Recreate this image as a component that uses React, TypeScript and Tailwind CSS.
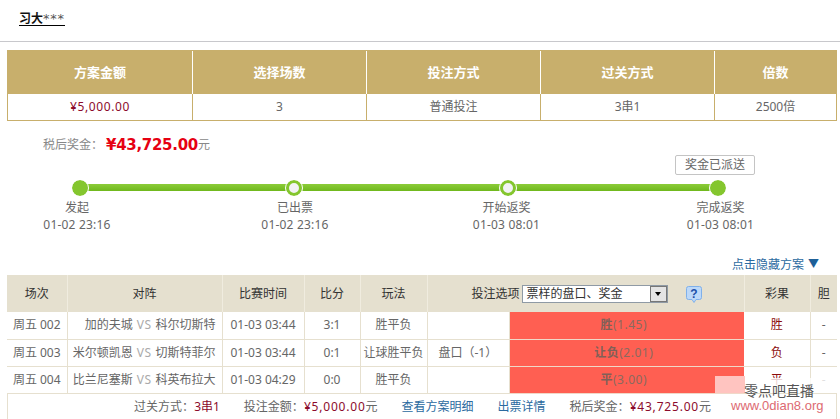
const cjk = "font-['Noto_Sans','Noto_Sans_CJK_SC',sans-serif]";

function Step({ title, time, hollow, shift }: { title: string; time: string; hollow?: boolean; shift: string }) {
  return (
    <div className="flex w-[80px] flex-col items-center text-[12px] leading-[17px] text-[#666]">
      <div className="relative z-10 flex h-[16px] w-[16px] items-center justify-center">
        {hollow ? (
          <div className="h-[16px] w-[16px] shrink-0 rounded-full border-[3px] border-[#84c62e] bg-[#f2f2f5] outline-[1px] outline-white" />
        ) : (
          <div className="h-[16px] w-[16px] shrink-0 rounded-full bg-[#84c62e] outline-[1px] outline-white" />
        )}
      </div>
      <div className={`mt-[3px] flex w-full flex-col items-center whitespace-nowrap ${shift}`}>
        <div>{title}</div>
        <div className="tracking-[0.2px]">{time}</div>
      </div>
    </div>
  );
}

function TopTable() {
  const head = ["方案金额", "选择场数", "投注方式", "过关方式", "倍数"];
  const vals = ["¥5,000.00", "3", "普通投注", "3串1", "2500倍"];
  const widths = ["w-[185px]", "w-[174px]", "w-[174px]", "w-[174px]", "w-[121px]"];
  return (
    <div className="mx-[7px] mt-[8px] w-[830px] border border-[#c8af6c]">
      <div className="flex h-[43px] bg-[#c8af6c]">
        {head.map((h, i) => (
          <div key={h} className={`${widths[i]} flex items-center justify-center border-r border-[#fff] text-[13px] font-bold text-white last:border-r-0`}>
            {h}
          </div>
        ))}
      </div>
      <div className="flex h-[26px] bg-white">
        {vals.map((v, i) => (
          <div key={v} className={`${widths[i]} flex items-center justify-center border-r border-[#c8af6c] text-[12px] last:border-r-0 ${i === 0 ? "tracking-[0.6px] text-[#8c0b2c]" : "text-[#666]"}`}>
            {v}
          </div>
        ))}
      </div>
    </div>
  );
}

const rows = [
  ["周五 002", "加的夫城", "科尔切斯特", "01-03 03:44", "3:1", "胜平负", "", "胜", "(1.45)", "胜"],
  ["周五 003", "米尔顿凯恩", "切斯特菲尔", "01-03 03:44", "0:1", "让球胜平负", "盘口（-1）", "让负", "(2.01)", "负"],
  ["周五 004", "比兰尼塞斯", "科英布拉大", "01-03 04:29", "0:0", "胜平负", "", "平", "(3.00)", "平"],
];

function BetTable() {
  const th = "border-r border-[#f0ecdf] font-normal text-[#333] last:border-r-0";
  const td = "border-r border-b border-[#e6e0cf] text-center";
  return (
    <table className="ml-[7px] w-[830px] table-fixed border-collapse text-[12px] text-[#666]">
      <colgroup>
        <col className="w-[60px]" />
        <col className="w-[155px]" />
        <col className="w-[82px]" />
        <col className="w-[56px]" />
        <col className="w-[67px]" />
        <col className="w-[82px]" />
        <col className="w-[235px]" />
        <col className="w-[66px]" />
        <col className="w-[27px]" />
      </colgroup>
      <thead>
        <tr className="h-[37px] bg-[#e5e0cf]">
          <th className={th}>场次</th>
          <th className={th}>对阵</th>
          <th className={th}>比赛时间</th>
          <th className={th}>比分</th>
          <th className={th}>玩法</th>
          <th colSpan={2} className={th}>
            <div className="flex items-center justify-end pr-[41px]">
              <span>投注选项</span>
              <span className="ml-[2px] flex h-[18px] w-[146px] items-center border border-[#8f9aa5] bg-white pl-[4px]">
                <span className="flex-1 text-left">票样的盘口、奖金</span>
                <span className="flex h-[16px] w-[17px] items-center justify-center border border-[#777] bg-[#e4e4e4]">
                  <span className="h-0 w-0 border-x-[3.5px] border-t-[4px] border-x-transparent border-t-black" />
                </span>
              </span>
              <svg width="18" height="18" viewBox="0 0 18 18" className="ml-[17px]">
                <path d="M1.5 3.5a2 2 0 0 1 2-2h11a2 2 0 0 1 2 2v9a2 2 0 0 1-2 2h-3.5l-2 3-2-3H3.5a2 2 0 0 1-2-2z" fill="#bcd8f8" stroke="#7fb0ea" />
                <text x="9" y="12.5" textAnchor="middle" fontSize="12" fontWeight="700" fill="#1d4fa8" fontFamily="Liberation Sans">?</text>
              </svg>
            </div>
          </th>
          <th className={th}>彩果</th>
          <th className={th}>胆</th>
        </tr>
      </thead>
      <tbody>
        {rows.map((r) => (
          <tr key={r[0]} className="h-[27px]">
            <td className={td}>{r[0]}</td>
            <td className={`${td} whitespace-nowrap`}>
              <div className="flex justify-end pr-[6px]">
                <span>{r[1]}</span>
                <span className="mx-[4px] tracking-[0.5px] text-[#aaa]">VS</span>
                <span>{r[2]}</span>
              </div>
            </td>
            <td className={td}>{r[3]}</td>
            <td className={td}>{r[4]}</td>
            <td className={`${td} whitespace-nowrap`}>{r[5]}</td>
            <td className={`${td} pl-[11px] !text-left whitespace-nowrap`}>{r[6]}</td>
            <td className="border-b border-[#f0d8c8] bg-[#ff5f52] pr-[6px] text-center tracking-[0.5px] text-[#8a6a60]">
              <b className="text-[#806058]">{r[7]}</b>
              {r[8]}
            </td>
            <td className={`${td} text-[#8c0b0b]`}>{r[9]}</td>
            <td className={`${td} border-r-0`}>-</td>
          </tr>
        ))}
      </tbody>
    </table>
  );
}

export default function App() {
  return (
    <div className={`relative h-[419px] w-[840px] overflow-hidden bg-white ${cjk}`}>
      <div className="flex h-[42px] items-start border-b border-[#c8c8cc] pl-[19px] pt-[13px]">
        <span className="flex items-start border-b border-black text-[12px] leading-[12px] font-bold text-[#111]">
          习大<span className="font-['DejaVu_Sans',sans-serif] text-[13px] font-normal tracking-[0.7px] text-[#555]">***</span>
        </span>
      </div>
      <TopTable />
      <div className="mt-[14px] flex h-[20px] items-center pl-[43px] text-[12px] text-[#888]">
        <span className="mr-[3px]">税后奖金：</span>
        <span className="font-['DejaVu_Sans',sans-serif] text-[15px] leading-[20px] font-bold tracking-[-0.3px] text-[#e60012]">¥43,725.00</span>
        <span>元</span>
      </div>
      <div className="relative mt-[25px] h-[76px]">
        <div className="absolute top-[4px] left-[80px] h-[7px] w-[638px] rounded-[1px] bg-gradient-to-b from-[#8ccc38] to-[#6fb81c]" />
        <div className="flex">
          <div className="ml-[40px]"><Step title="发起" time="01-02 23:16" shift="pr-[6px]" /></div>
          <div className="ml-[134px]"><Step title="已出票" time="01-02 23:16" hollow shift="pl-[2px]" /></div>
          <div className="ml-[134px]"><Step title="开始返奖" time="01-03 08:01" hollow shift="pr-[3px]" /></div>
          <div className="ml-[130px]"><Step title="完成返奖" time="01-03 08:01" shift="pl-[5px]" /></div>
        </div>
        <div className="absolute top-[-25px] left-[675px] flex h-[20px] w-[80px] items-center justify-center rounded-[2px] border border-[#c4c4c4] text-[12px] text-[#666]">
          奖金已派送
        </div>
      </div>
      <div className="flex h-[17px] items-center justify-end pr-[21px] text-[12px] text-[#2b6aa0]">
        点击隐藏方案 <span className="ml-[4px] text-[11px] text-[#1e6098]">▼</span>
      </div>
      <div className="mt-[2px]">
        <BetTable />
      </div>
      <div className="ml-[7px] flex h-[27px] w-[830px] items-center justify-end gap-[24px] border-x border-[#e6e0cf] pr-[125px] text-[12px] text-[#666]">
        <span>过关方式：<span className="text-[#8c0b2c]">3串1</span></span>
        <span>投注金额：<span className="tracking-[0.8px] text-[#8c0b2c]">¥5,000.00</span>元</span>
        <span className="text-[#2b6aa0]">查看方案明细</span>
        <span className="text-[#2b6aa0]">出票详情</span>
        <span>税后奖金：<span className="tracking-[0.8px] text-[#8c0b2c]">¥43,725.00</span>元</span>
      </div>
      <div className="absolute top-[376px] left-[715px] h-[17px] w-[30px] bg-[#ffc4c0]" />
      <div className="absolute top-[378px] left-[745px] h-[15px] w-[92px] bg-white/80" />
      <div className="absolute top-[384px] left-[744px] text-[14px] leading-[14px] text-[#555]">零点吧直播</div>
      <div className="absolute top-[399px] left-[731px] font-['Liberation_Sans',sans-serif] text-[13px] leading-[14px] text-[#dd6a72]">www.0dian8.org</div>
    </div>
  );
}
